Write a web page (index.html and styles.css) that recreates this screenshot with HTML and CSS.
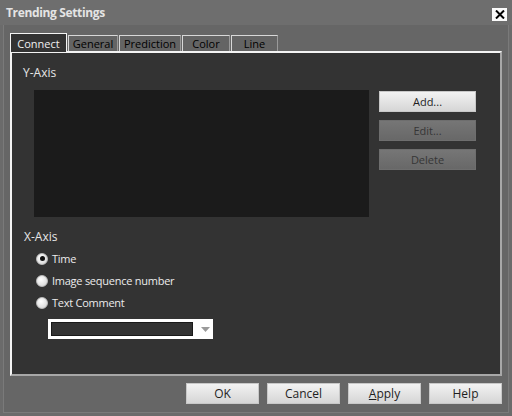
FILE: index.html
```html
<!DOCTYPE html>
<html>
<head>
<meta charset="utf-8">
<link rel="stylesheet" href="styles.css">
</head>
<body>
<div class="window">
  <div class="titlebar">
    <span class="title">Trending Settings</span>
    <span class="close"><svg width="10" height="9" viewBox="0 0 10 9"><path d="M1 0.5 L9 8.5 M9 0.5 L1 8.5" stroke="#000" stroke-width="2"/></svg></span>
  </div>
  <div class="frame">
    <div class="tabs">
      <div class="tab active">Connect</div>
      <div class="tab w-general">General</div>
      <div class="tab w-prediction">Prediction</div>
      <div class="tab w-color">Color</div>
      <div class="tab w-line">Line</div>
    </div>
    <div class="panel">
      <div class="section-label">Y-Axis</div>
      <div class="yaxis">
        <div class="listbox"></div>
        <div class="side-buttons">
          <div class="btn light">Add...</div>
          <div class="btn disabled">Edit...</div>
          <div class="btn disabled">Delete</div>
        </div>
      </div>
      <div class="section-label xlabel">X-Axis</div>
      <div class="radios">
        <div class="radio-row"><span class="radio checked"></span><span>Time</span></div>
        <div class="radio-row"><span class="radio"></span><span>Image sequence number</span></div>
        <div class="radio-row"><span class="radio"></span><span>Text Comment</span></div>
      </div>
      <div class="combo">
        <div class="combo-field"></div>
        <svg class="combo-arrow" width="9" height="5" viewBox="0 0 9 5"><path d="M0 0 H9 L4.5 5 Z" fill="#9a9a9a"/></svg>
      </div>
    </div>
    <div class="footer">
      <div class="btn light fbtn">OK</div>
      <div class="btn light fbtn">Cancel</div>
      <div class="btn light fbtn"><u>A</u>pply</div>
      <div class="btn light fbtn">Help</div>
    </div>
  </div>
</div>
</body>
</html>
```

FILE: styles.css
```css
html, body {
  margin: 0;
  padding: 0;
}
body {
  width: 512px;
  height: 416px;
  overflow: hidden;
  background: #686868;
  font-family: "Open Sans", "Noto Sans", sans-serif;
  font-size: 11px;
}
.window {
  width: 512px;
  height: 416px;
  display: flex;
  flex-direction: column;
  background: #6b6b6b;
}
.titlebar {
  height: 25px;
  display: flex;
  align-items: center;
  justify-content: space-between;
  padding: 0 4px 0 6px;
  background: #6e6e6e;
  box-sizing: border-box;
}
.title {
  color: #e4e4e4;
  font-weight: bold;
  font-size: 12px;
  letter-spacing: -0.35px;
}
.close {
  width: 15px;
  height: 13px;
  background: #fafafa;
  display: flex;
  align-items: center;
  justify-content: center;
  margin-top: 3px;
  margin-right: 1px;
}
.frame {
  flex: 1;
  margin: 0 3px 3px 3px;
  border-left: 1px solid #7a7a7a;
  border-right: 1px solid #7a7a7a;
  border-bottom: 1px solid #7a7a7a;
  background: #666666;
  padding: 7px 6px 0 6px;
  display: flex;
  flex-direction: column;
}
.tabs {
  display: flex;
  align-items: flex-end;
  height: 19px;
}
.tab {
  height: 16px;
  box-sizing: border-box;
  background: #646464;
  color: #000000;
  border-top: 1px solid #d8d8d8;
  border-left: 1px solid #d8d8d8;
  border-right: 1px solid #9a9a9a;
  display: flex;
  align-items: center;
  justify-content: center;
  line-height: 1;
  margin-left: 1px;
}
.tab.active {
  width: 57px;
  height: 19px;
  margin-left: 0;
  background: #333333;
  color: #f0f0f0;
  border-top: 1px solid #f4f4f4;
  border-left: 1px solid #f4f4f4;
  border-right: 1px solid #f4f4f4;
  margin-bottom: -1px;
  position: relative;
  z-index: 1;
  padding-top: 1px;
}
.w-general { width: 50px; }
.w-prediction { width: 62px; }
.w-color { width: 48px; }
.w-line { width: 47px; }
.panel {
  height: 325px;
  box-sizing: border-box;
  background: #333333;
  border-top: 2px solid #f4f4f4;
  border-left: 2px solid #f4f4f4;
  border-right: 2px solid #a8a8a8;
  border-bottom: 2px solid #a8a8a8;
  padding: 12px 0 0 11px;
  display: flex;
  flex-direction: column;
}
.section-label {
  color: #e6e6e6;
  font-size: 12px;
  line-height: 16px;
}
.yaxis {
  display: flex;
  margin-top: 9px;
  margin-left: 11px;
}
.listbox {
  width: 335px;
  height: 127px;
  background: #1b1b1b;
}
.side-buttons {
  display: flex;
  flex-direction: column;
  gap: 8px;
  margin-left: 10px;
  margin-top: 1px;
}
.btn {
  width: 97px;
  height: 21px;
  box-sizing: border-box;
  display: flex;
  align-items: center;
  justify-content: center;
  font-size: 11px;
}
.btn.light {
  background: linear-gradient(#f2f2f2, #d6d6d6);
  color: #1e1e1e;
  border: 1px solid #c8c8c8;
}
.btn.disabled {
  background: linear-gradient(#767676, #686868);
  color: #363636;
  border: 1px solid #6e6e6e;
}
.xlabel {
  margin-top: 12px;
  margin-left: 1px;
}
.radios {
  display: flex;
  flex-direction: column;
  gap: 7px;
  margin-top: 6px;
  margin-left: 13px;
  color: #ececec;
  letter-spacing: -0.25px;
}
.radio-row {
  display: flex;
  align-items: center;
  gap: 4px;
  height: 15px;
}
.radio {
  width: 12px;
  height: 12px;
  border-radius: 50%;
  box-sizing: border-box;
  background: radial-gradient(circle at 40% 35%, #ffffff, #d0d0d0);
  border: 1px solid #bdbdbd;
  display: flex;
  align-items: center;
  justify-content: center;
}
.radio.checked::after {
  content: "";
  width: 5px;
  height: 5px;
  border-radius: 50%;
  background: #111;
}
.combo {
  width: 165px;
  height: 20px;
  box-sizing: border-box;
  margin-top: 9px;
  margin-left: 25px;
  background: #ffffff;
  padding: 3px 0 3px 3px;
  display: flex;
  align-items: center;
}
.combo-field {
  width: 142px;
  height: 14px;
  background: #333333;
  border: 1px solid #1a1a1a;
  box-sizing: border-box;
}
.combo-arrow {
  margin-left: 8px;
}
.footer {
  display: flex;
  justify-content: flex-end;
  gap: 8px;
  margin-top: 7px;
}
.fbtn {
  width: 73px;
  height: 21px;
  font-size: 12px;
}
```
